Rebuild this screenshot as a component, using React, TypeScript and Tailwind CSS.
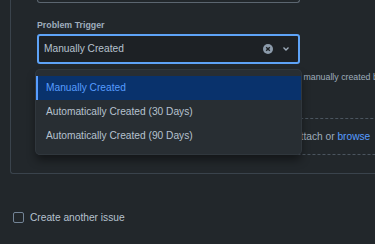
import React from "react";

const options = [
  "Manually Created",
  "Automatically Created (30 Days)",
  "Automatically Created (90 Days)",
];

const App = () => {
  return (
    <div className="relative w-[375px] h-[244px] overflow-hidden bg-[#22272b] font-['Liberation_Sans',Arial,sans-serif]">
      {/* form panel */}
      <div className="ml-[10px] h-[174px] w-[420px] border-l border-b border-[#3a434c] rounded-bl-[3px] pl-[26px]">
        <div className="h-[3px] w-[263px] border border-t-0 border-[#5c6670] rounded-b-[3px]" />

        <div className="mt-[16px] text-[8.8px] leading-[12px] font-bold text-[#9fadbc]">
          Problem Trigger
        </div>

        <div className="mt-[3px] flex h-[30px] w-[263px] items-center rounded-[3px] border-2 border-[#5ea3f7] bg-[#1d2125] pl-[5px] pr-[8px]">
          <span className="flex-1 text-[10.2px] text-[#b6c2cf]">Manually Created</span>
          <svg width="10" height="10" viewBox="0 0 10 10" className="mr-[9px]">
            <circle cx="5" cy="5" r="5" fill="#8c9bab" />
            <path d="M3.2 3.2 6.8 6.8M6.8 3.2 3.2 6.8" stroke="#1d2125" strokeWidth="1.4" />
          </svg>
          <svg width="8" height="6" viewBox="0 0 8 6">
            <path d="M1.5 1.5 4 4l2.5-2.5" fill="none" stroke="#9fadbc" strokeWidth="1.3" />
          </svg>
        </div>

        <p className="mt-[7px] w-[400px] text-[8.8px] leading-[12px] text-[#9fadbc]">
          Choose whether new problem records linked to this service are now manually created by agents
        </p>

        <div className="mt-[35px] flex h-[37px] w-[534px] items-center justify-center rounded-[3px] border border-dashed border-[#4b555f]">
          <span className="text-[10.2px] text-[#9fadbc]">
            Drop files to attach or <span className="text-[#579dff]">browse</span>
          </span>
        </div>
      </div>

      <label className="mt-[36px] ml-[13px] flex items-center gap-[6px]">
        <span className="h-[11px] w-[11px] rounded-[2px] border border-[#738496]" />
        <span className="text-[10.2px] text-[#b6c2cf]">Create another issue</span>
      </label>

      {/* open select menu */}
      <div className="absolute left-[36px] top-[70px] w-[265px] rounded-[4px] bg-[#282e33] py-[6px] shadow-[0_6px_10px_rgba(0,0,0,0.45)] ring-1 ring-[#30373d]">
        {options.map((o, i) => (
          <div
            key={o}
            className={
              i === 0
                ? "flex h-[24px] items-center border-l-2 border-[#579dff] bg-[#09326c] pl-[8px] text-[10.2px] text-[#579dff]"
                : "flex h-[24px] items-center pl-[10px] text-[10.2px] text-[#b6c2cf]"
            }
          >
            {o}
          </div>
        ))}
      </div>
    </div>
  );
};

export default App;
